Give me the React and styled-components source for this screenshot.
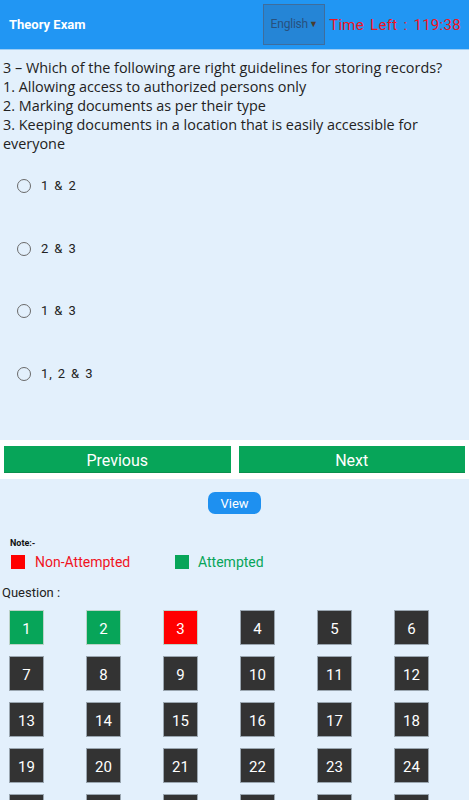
import styled, { createGlobalStyle } from "styled-components";

const GlobalStyle = createGlobalStyle`
  body {
    margin: 0;
    background: #e3f0fc;
    font-family: Roboto, "Liberation Sans", sans-serif;
  }
`;

const Page = styled.div`
  width: 469px;
  min-height: 800px;
  background: #e3f0fc;
  overflow: hidden;
`;

const Header = styled.header`
  height: 49px;
  background: #2196f3;
  border-bottom: 1px solid #9ccdf5;
  display: flex;
  align-items: center;
  padding: 0 8px 0 9px;
`;

const Title = styled.h1`
  margin: 0;
  flex: 1;
  font-size: 13px;
  font-weight: 700;
  color: #fff;
`;

const LangSelect = styled.div`
  width: 62px;
  height: 41px;
  margin-top: -1px;
  box-sizing: border-box;
  background: #2585d6;
  border: 1px solid #3f6d9c;
  display: flex;
  align-items: center;
  justify-content: center;
  font-size: 12px;
  color: #28517e;
  letter-spacing: -0.2px;
`;

const Caret = styled.span`
  font-size: 9px;
  color: #4a3c2e;
  margin-left: 1px;
`;

const Timer = styled.div`
  margin-left: 4px;
  font-size: 15px;
  color: #f0141e;
  letter-spacing: 0.3px;
  word-spacing: 2px;
`;

const Question = styled.p`
  margin: 0;
  padding: 8px 3px 0;
  font-family: "Open Sans", sans-serif;
  font-size: 14.4px;
  line-height: 19px;
  color: #222;
`;

const Options = styled.div`
  display: flex;
  flex-direction: column;
  padding: 25px 0 0 17px;
  height: 261px;
`;

const Option = styled.label`
  height: 62.7px;
  display: flex;
  align-items: flex-start;
  font-size: 13px;
  color: #222;
  letter-spacing: 0.9px;
  word-spacing: 1px;
`;

const Radio = styled.span`
  width: 12px;
  height: 12px;
  border: 1.6px solid #6a6a6a;
  border-radius: 50%;
  margin-right: 10px;
  margin-top: 1px;
`;

const NavBand = styled.div`
  background: #fff;
  display: flex;
  gap: 8px;
  padding: 6px 4px;
  margin-top: 1px;
`;

const NavButton = styled.button`
  flex: 1;
  height: 27px;
  border: none;
  border-bottom: 1px solid #0a8f4e;
  background: #07a559;
  color: #fff;
  font-family: Roboto, sans-serif;
  font-size: 16px;
  padding: 0;
  padding-top: 3px;
`;

const ViewRow = styled.div`
  display: flex;
  justify-content: center;
  padding-top: 13px;
`;

const ViewButton = styled.button`
  width: 53px;
  height: 22px;
  border: none;
  border-radius: 7px;
  background: #1e90f0;
  color: #fff;
  font-family: Roboto, sans-serif;
  font-size: 13px;
  padding: 0;
`;

const Note = styled.div`
  font-size: 9px;
  font-weight: 700;
  color: #111;
  padding: 24px 0 0 10px;
`;

const Legend = styled.div`
  display: flex;
  align-items: center;
  padding: 6px 0 0 11px;
`;

const LegendItem = styled.div`
  display: flex;
  align-items: center;
  width: ${(p) => p.$w}px;
  font-size: 14px;
  color: ${(p) => p.$color};
`;

const Swatch = styled.span`
  width: 14px;
  height: 14px;
  background: ${(p) => p.$color};
  margin-right: ${(p) => p.$gap}px;
`;

const QuestionLabel = styled.div`
  font-size: 13px;
  color: #222;
  padding: 15px 0 0 2px;
`;

const Grid = styled.div`
  display: grid;
  grid-template-columns: repeat(6, 77px);
  row-gap: 11px;
  padding: 10px 0 0 9px;
`;

const Cell = styled.div`
  width: 35px;
  height: 35px;
  box-sizing: border-box;
  border: 1px solid ${(p) => (p.$state === "none" ? "#9aa6b0" : "#bcd3c8")};
  background: ${(p) =>
    p.$state === "done" ? "#07a559" : p.$state === "skip" ? "#ff0000" : "#333333"};
  color: #fff;
  font-size: 15px;
  display: flex;
  align-items: center;
  justify-content: center;
  padding-top: 2px;
`;

const options = ["1 & 2", "2 & 3", "1 & 3", "1, 2 & 3"];

const stateOf = (n) => (n === 1 || n === 2 ? "done" : n === 3 ? "skip" : "none");

export default function App() {
  return (
    <Page>
      <GlobalStyle />
      <Header>
        <Title>Theory Exam</Title>
        <LangSelect>
          English<Caret>▼</Caret>
        </LangSelect>
        <Timer>Time Left : 119:38</Timer>
      </Header>

      <Question>
        3 – Which of the following are right guidelines for storing records?
        <br />
        1. Allowing access to authorized persons only
        <br />
        2. Marking documents as per their type
        <br />
        3. Keeping documents in a location that is easily accessible for everyone
      </Question>

      <Options>
        {options.map((o) => (
          <Option key={o}>
            <Radio />
            {o}
          </Option>
        ))}
      </Options>

      <NavBand>
        <NavButton>Previous</NavButton>
        <NavButton>Next</NavButton>
      </NavBand>

      <ViewRow>
        <ViewButton>View</ViewButton>
      </ViewRow>

      <Note>Note:-</Note>
      <Legend>
        <LegendItem $w={164} $color="#f0141e">
          <Swatch $color="#ff0000" $gap={10} />
          Non-Attempted
        </LegendItem>
        <LegendItem $w={120} $color="#07a559">
          <Swatch $color="#07a559" $gap={9} />
          Attempted
        </LegendItem>
      </Legend>

      <QuestionLabel>Question :</QuestionLabel>
      <Grid>
        {Array.from({ length: 30 }, (_, i) => i + 1).map((n) => (
          <Cell key={n} $state={stateOf(n)}>
            {n}
          </Cell>
        ))}
      </Grid>
    </Page>
  );
}
